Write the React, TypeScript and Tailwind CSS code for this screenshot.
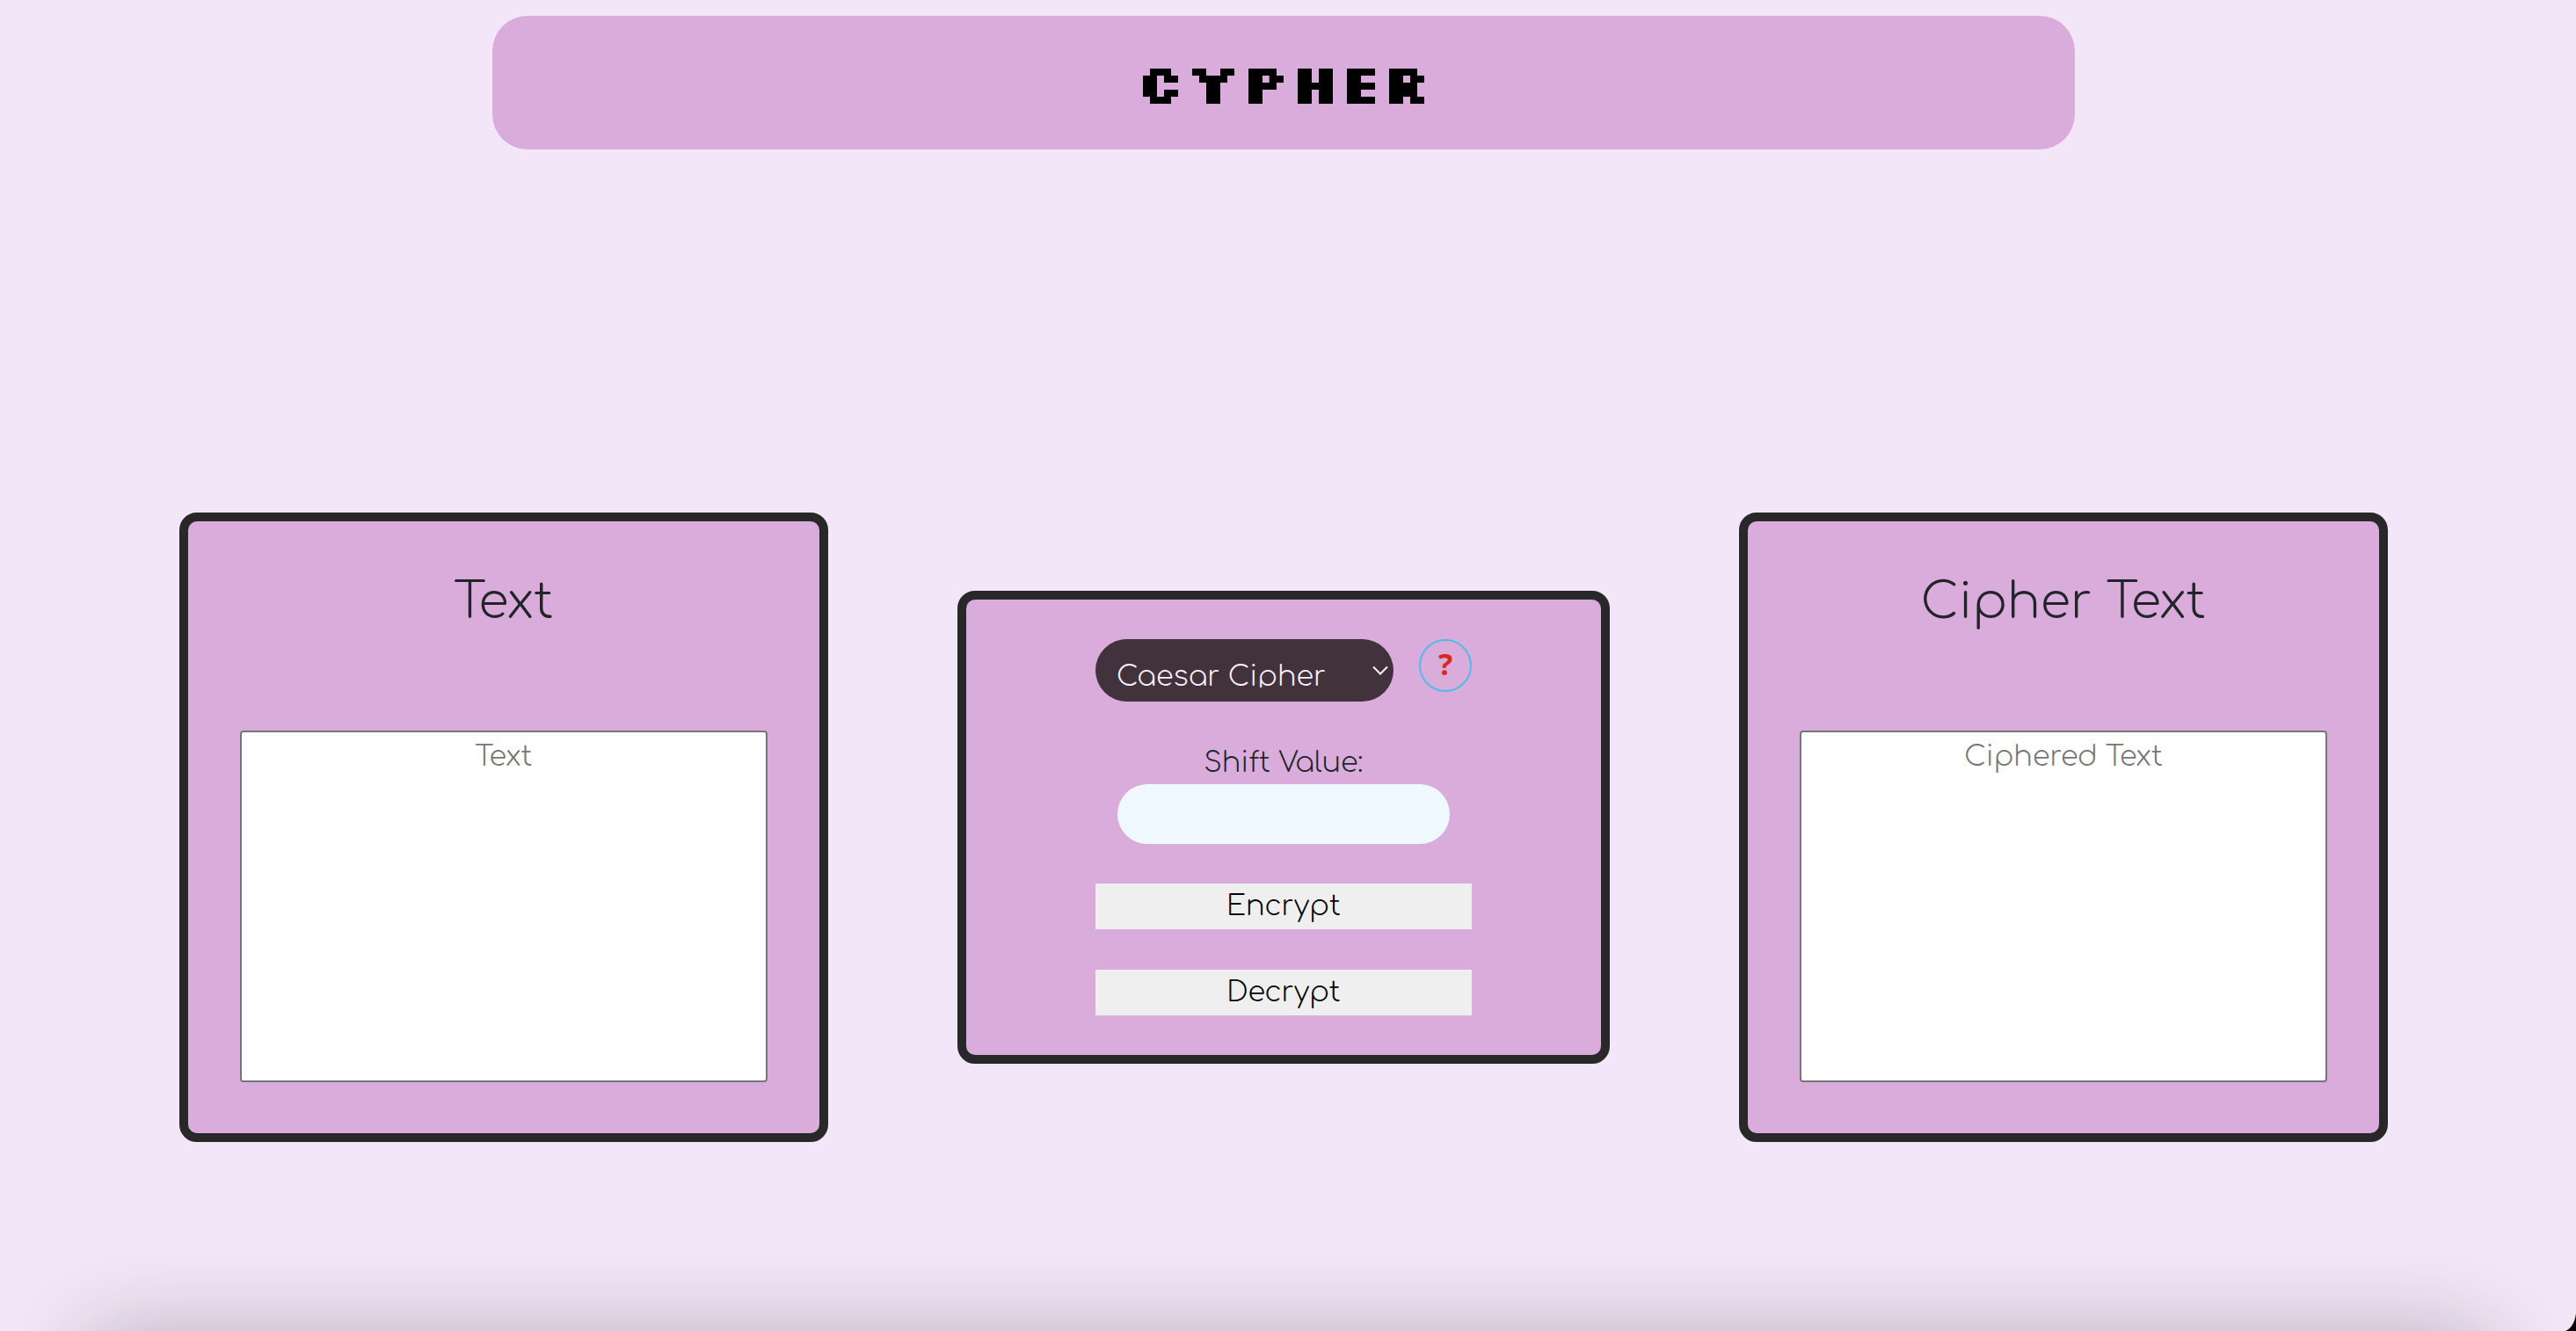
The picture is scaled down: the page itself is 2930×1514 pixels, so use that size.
import React, { useState } from "react";

function shift(text: string, by: number) {
  return text.replace(/[a-z]/gi, (ch) => {
    const base = ch <= "Z" ? 65 : 97;
    return String.fromCharCode(((((ch.charCodeAt(0) - base + by) % 26) + 26) % 26) + base);
  });
}

type PanelProps = {
  id: string;
  title: string;
  placeholder: string;
  value: string;
  onChange: (value: string) => void;
};

function TextPanel({ id, title, placeholder, value, onChange }: PanelProps) {
  return (
    <section className="flex flex-col items-center rounded-[20px] border-10 border-[#282828] bg-[#d9acdb] px-12 pt-14 pb-[58px]">
      <label htmlFor={id} className="text-[56px] leading-[72px] font-light text-[#212529]">
        {title}
      </label>
      <textarea
        id={id}
        placeholder={placeholder}
        value={value}
        onChange={(e) => onChange(e.target.value)}
        className="mt-[110px] block h-[400px] w-full max-w-[600px] resize-none rounded-[4px] border-2 border-[#767676] bg-white px-1 py-1 text-center text-[32px] leading-[48px] font-light text-black placeholder:text-[#757575]"
      />
    </section>
  );
}

export default function App() {
  const [plain, setPlain] = useState("");
  const [cipher, setCipher] = useState("");
  const [amount, setAmount] = useState("");
  const by = Number(amount) || 0;

  return (
    <div className="relative min-h-screen overflow-hidden bg-[#f3e6f8] pt-[18px] pr-[10px] font-['Comfortaa','Lato',sans-serif]">
      <header className="mx-auto flex h-[152px] w-[calc(100%-1120px)] min-w-[600px] items-center justify-center rounded-[40px] bg-[#d9acdb]">
        <h1 className="pb-0.5 font-['Silkscreen','DejaVu_Sans',sans-serif] text-[64px] leading-[72px] font-bold text-black">CYPHER</h1>
      </header>

      <main className="mt-[413px] grid grid-cols-[738fr_742fr_738fr] items-center gap-[147px] px-[204px]">
        <TextPanel id="plain" title="Text" placeholder="Text" value={plain} onChange={setPlain} />

        <section className="flex flex-col items-center rounded-[20px] border-10 border-[#282828] bg-[#d9acdb] py-[45px]">
          <div className="flex w-[428px] flex-col">
            <div className="flex items-start justify-between">
              <div className="relative">
                <select
                  aria-label="Cipher"
                  className="block h-[71px] w-[339px] appearance-none rounded-full bg-[#41323b] pt-[25px] pr-12 pb-4 pl-6 text-[32px] leading-[36px] font-light text-[#fdeffd]"
                >
                  <option>Caesar Cipher</option>
                </select>
                <svg
                  aria-hidden="true"
                  viewBox="0 0 18 12"
                  className="pointer-events-none absolute top-[30px] right-[6px] h-3 w-[18px] fill-none stroke-[#fdeffd] stroke-2"
                >
                  <path d="M1 1.5 9 9.5 17 1.5" />
                </svg>
              </div>
              <button
                type="button"
                aria-label="Help"
                className="flex h-[60px] w-[60px] items-center justify-center rounded-full border-2 border-[#4fbce8] pb-1 font-['Noto_Sans',sans-serif] text-[34px] leading-[40px] font-bold text-[#d32b20]"
              >
                ?
              </button>
            </div>

            <label htmlFor="shift" className="mt-[46px] text-center text-[32px] leading-[48px] font-light text-[#212529]">
              Shift Value:
            </label>
            <input
              id="shift"
              type="text"
              value={amount}
              onChange={(e) => setAmount(e.target.value)}
              className="mx-auto h-[68px] w-[378px] rounded-full bg-[#f0f8ff] px-6 text-center text-[32px] font-light text-black"
            />
            <button
              type="button"
              onClick={() => setCipher(shift(plain, by))}
              className="mt-[45px] h-[52px] bg-[#efefef] text-[32px] leading-[48px] font-light text-black"
            >
              Encrypt
            </button>
            <button
              type="button"
              onClick={() => setPlain(shift(cipher, -by))}
              className="mt-[46px] h-[52px] bg-[#efefef] text-[32px] leading-[48px] font-light text-black"
            >
              Decrypt
            </button>
          </div>
        </section>

        <TextPanel id="cipher" title="Cipher Text" placeholder="Ciphered Text" value={cipher} onChange={setCipher} />
      </main>

      <div
        aria-hidden="true"
        className="pointer-events-none absolute inset-x-[100px] top-full h-[300px] shadow-[0_4px_96px_rgba(10,16,16,0.26)]"
      />
      <svg aria-hidden="true" viewBox="0 0 12 20" className="absolute right-0 bottom-0 h-5 w-3 fill-black">
        <path d="M12 0C11 9 7 17 0 20H12Z" />
      </svg>
    </div>
  );
}
